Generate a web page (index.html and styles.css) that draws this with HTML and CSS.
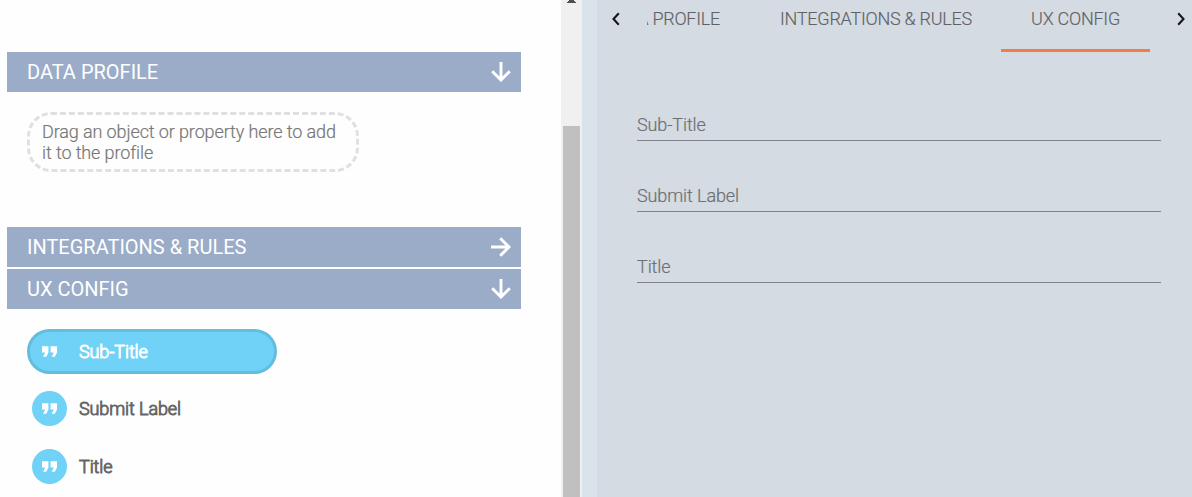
FILE: index.html
```html
<!DOCTYPE html>
<html lang="en">
<head>
<meta charset="utf-8">
<title>UX Config</title>
<link rel="stylesheet" href="styles.css">
</head>
<body>
<svg width="0" height="0" class="defs">
  <symbol id="down" viewBox="0 0 20 20"><path d="M10 0V17.5M1.2 9.2L10 18L18.8 9.2" fill="none" stroke="currentColor" stroke-width="2.9"/></symbol>
  <symbol id="right" viewBox="0 0 20 20"><path d="M0 10H17.5M9.2 1.2L18 10L9.2 18.8" fill="none" stroke="currentColor" stroke-width="2.9"/></symbol>
  <symbol id="quote" viewBox="5 7 14 10"><path d="M6 17h3l2-4V7H5v6h3zm8 0h3l2-4V7h-6v6h3z" fill="currentColor"/></symbol>
</svg>
<div class="app">
  <main class="model">
    <section class="group group-data">
      <header class="bar"><span>DATA PROFILE</span><svg class="arrow"><use href="#down"/></svg></header>
      <div class="dropzone">Drag an object or property here to add it to the profile</div>
    </section>
    <section class="group">
      <header class="bar"><span>INTEGRATIONS &amp; RULES</span><svg class="arrow"><use href="#right"/></svg></header>
    </section>
    <section class="group">
      <header class="bar"><span>UX CONFIG</span><svg class="arrow"><use href="#down"/></svg></header>
      <ul class="items">
        <li class="item selected"><span class="badge"><svg class="quote"><use href="#quote"/></svg></span><span class="label">Sub-Title</span></li>
        <li class="item"><span class="badge"><svg class="quote"><use href="#quote"/></svg></span><span class="label">Submit Label</span></li>
        <li class="item"><span class="badge"><svg class="quote"><use href="#quote"/></svg></span><span class="label">Title</span></li>
      </ul>
    </section>
  </main>
  <div class="scrollbar">
    <svg class="scroll-up" viewBox="0 0 9 3"><path d="M2 0H7V1H8V2H9V3H0V2H1V1H2Z" fill="#505050"/></svg>
    <div class="thumb"></div>
  </div>
  <div class="divider"></div>
  <aside class="panel">
    <nav class="tabs">
      <svg class="chevron" viewBox="0 0 8 14"><path d="M6.8 1.2L1.5 7L6.8 12.8" fill="none" stroke="#15181b" stroke-width="2.1"/></svg>
      <div class="tab-window">
        <div class="tab tab-data"><span>DATA PROFILE</span></div>
        <div class="tab tab-rules">INTEGRATIONS &amp; RULES</div>
        <div class="tab active">UX CONFIG</div>
      </div>
      <svg class="chevron" viewBox="0 0 8 14"><path d="M1.2 1.2L6.5 7L1.2 12.8" fill="none" stroke="#15181b" stroke-width="2.1"/></svg>
    </nav>
    <div class="fields">
      <label class="field">Sub-Title</label>
      <label class="field">Submit Label</label>
      <label class="field">Title</label>
    </div>
  </aside>
</div>
</body>
</html>
```
FILE: styles.css
```css
* { box-sizing: border-box; }
body {
  margin: 0;
  font-family: Roboto, "Liberation Sans", sans-serif;
  font-size: 18px;
  font-weight: 300;
  overflow: hidden;
}
.defs { display: none; }
.app { display: flex; width: 1192px; height: 497px; overflow: hidden; }
.model {
  width: 561px;
  padding: 52px 40px 0 7px;
  background: #fefefe;
  display: flex;
  flex-direction: column;
  gap: 2px;
}
.group-data { height: 173px; }
.bar {
  height: 40px;
  padding: 0 10px 0 20px;
  display: flex;
  align-items: center;
  justify-content: space-between;
  background: #9aacc8;
  color: #fff;
  font-size: 20px;
  font-weight: 400;
}
.arrow { width: 20px; height: 20px; }
.dropzone {
  width: 332px;
  height: 60px;
  margin: 20px 0 0 20px;
  padding: 6px 12px;
  border: 3px dashed #e0e0e0;
  border-radius: 24px;
  color: #777;
  line-height: 21px;
  letter-spacing: -0.11px;
  -webkit-text-stroke: 0.2px currentColor;
}
.items {
  list-style: none;
  margin: 20px 0 0 20px;
  padding: 0;
  display: flex;
  flex-direction: column;
  gap: 13px;
}
.item {
  width: 250px;
  height: 45px;
  padding-left: 2px;
  display: flex;
  align-items: center;
  gap: 12px;
  border: 3px solid transparent;
  border-radius: 23px;
  color: #666;
}
.item:nth-child(2) { margin-top: -1px; }
.selected { background: #70d2f6; border-color: #64bddd; color: #fff; }
.badge {
  width: 35px;
  height: 35px;
  border-radius: 50%;
  background: #70d2f6;
  display: flex;
  align-items: center;
  justify-content: center;
}
.quote { width: 15px; height: 11px; margin-bottom: 1px; color: #fff; }
.label { letter-spacing: -0.1px; -webkit-text-stroke: 0.9px currentColor; }
.scrollbar {
  width: 21px;
  background: #f0f0f0;
  display: flex;
  flex-direction: column;
  align-items: center;
}
.scroll-up { width: 9px; height: 3px; }
.thumb { width: 17px; flex: 1; margin-top: 123px; background: #c0c0c0; }
.divider { width: 15px; background: #dae2ec; }
.panel { flex: 1; background: #d4dbe2; color: #5e6266; }
.tabs {
  height: 52px;
  padding: 0 7px 0 15px;
  display: flex;
  letter-spacing: -0.25px;
}
.chevron { width: 8px; height: 14px; margin-top: 12px; flex: none; }
.tab-window { width: 503px; margin: 0 27px 0 27px; display: flex; overflow: hidden; }
.tab {
  height: 52px;
  line-height: 37px;
  flex: none;
  white-space: nowrap;
  -webkit-text-stroke: 0.15px currentColor;
}
.tab-data { width: 73px; display: flex; justify-content: flex-end; overflow: hidden; }
.tab-rules { width: 281px; padding-left: 31px; text-align: center; }
.active { width: 149px; text-align: center; border-bottom: 3px solid #f47c48; }
.fields { padding: 60px 31px 0 40px; }
.field {
  display: block;
  height: 29px;
  margin-bottom: 42px;
  border-bottom: 1px solid #7c838b;
  line-height: 26px;
  color: #6d7072;
  letter-spacing: -0.1px;
  -webkit-text-stroke: 0.2px currentColor;
}
```
